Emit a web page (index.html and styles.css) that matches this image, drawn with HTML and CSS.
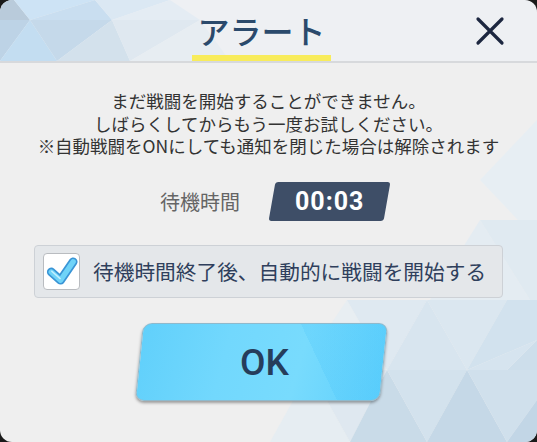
FILE: index.html
```html
<!DOCTYPE html>
<html lang="ja">
<head>
  <meta charset="UTF-8" />
  <meta name="viewport" content="width=device-width,initial-scale=1.0" />
  <title>アラート</title>
  <link rel="stylesheet" href="styles.css">
</head>
<body>

  <div class="dialog">
    <svg class="deco" viewBox="0 0 537 442" preserveAspectRatio="none" aria-hidden="true">
      <!-- header triangles -->
      <polygon points="0,0 14,0 30,20 0,20" fill="#b9cbdb"/>
      <polygon points="14,0 95,0 30,20" fill="#cde3f5"/>
      <polygon points="30,20 95,0 112,20" fill="#c9def0"/>
      <polygon points="95,0 170,0 112,20" fill="#dbe8f3"/>
      <polygon points="112,20 170,0 200,20" fill="#e4ecf3"/>
      <polygon points="0,20 30,20 0,61" fill="#bdd3e6"/>
      <polygon points="0,61 30,20 57,61" fill="#c3ddf1"/>
      <polygon points="30,20 112,20 57,61" fill="#c5d9ea"/>
      <polygon points="57,61 112,20 130,61" fill="#d3e1ec"/>
      <polygon points="112,20 200,20 130,61" fill="#dfe8f0"/>
      <polygon points="130,61 200,20 230,61" fill="#e7edf2"/>
      <!-- body triangles -->
      <polygon points="480,180 537,120 537,240" fill="#e7eef3"/>
      <polygon points="430,300 480,220 530,300" fill="#e4ecf2"/>
      <polygon points="480,220 537,220 537,300 530,300" fill="#e0eaf1"/>
      <polygon points="300,370 347,300 387,370" fill="#e8eef2"/>
      <polygon points="347,300 387,370 427,300" fill="#dfe9f1"/>
      <polygon points="387,370 427,300 467,370" fill="#d8e5ef"/>
      <polygon points="427,300 467,370 507,300" fill="#dbe7f0"/>
      <polygon points="467,370 507,300 537,300 537,340" fill="#d2e2ee"/>
      <polygon points="507,370 537,340 537,370" fill="#cddeeb"/>
      <polygon points="467,370 507,370 537,340" fill="#d6e4ef"/>
      <polygon points="270,442 310,370 350,442" fill="#e6edf2"/>
      <polygon points="310,370 350,442 387,370" fill="#dfe8f0"/>
      <polygon points="350,442 387,370 427,442" fill="#c9dbe8"/>
      <polygon points="387,370 427,442 467,370" fill="#d3e2ed"/>
      <polygon points="427,442 467,370 507,442" fill="#c5d8e7"/>
      <polygon points="467,370 507,442 537,400 537,370" fill="#d0e0ec"/>
      <polygon points="507,442 537,442 537,400" fill="#c2d6e6"/>
    </svg>

    <header class="dialog-head">
      <span></span>
      <h1 class="title">アラート</h1>
      <button class="close" aria-label="閉じる">
        <svg width="30" height="30" viewBox="0 0 30 30">
          <path d="M3 3 L27 27 M27 3 L3 27" stroke="#1d2740" stroke-width="3.2" stroke-linecap="round" fill="none"/>
        </svg>
      </button>
    </header>

    <main class="dialog-body">
      <p class="message">
        <span class="line">まだ戦闘を開始することができません。</span>
        <span class="line">しばらくしてからもう一度お試しください。</span>
        <span class="line">※自動戦闘をONにしても通知を閉じた場合は解除されます</span>
      </p>

      <div class="wait">
        <span class="wait-label">待機時間</span>
        <span class="timer"><span class="timer-value">00:03</span></span>
      </div>

      <label class="auto-start">
        <span class="check">
          <svg width="36" height="36" viewBox="0 0 36 36">
            <path d="M7.5 19 L17 27.5 L30 8.5" stroke="#3a95d6" stroke-width="9" stroke-linecap="round" stroke-linejoin="round" fill="none"/>
            <path d="M7.5 19 L17 27.5 L30 8.5" stroke="#6fd3f8" stroke-width="5.5" stroke-linecap="round" stroke-linejoin="round" fill="none"/>
            <path d="M8 18.2 L16.6 25.8" stroke="#c4f0ff" stroke-width="1.5" stroke-linecap="round" fill="none"/>
          </svg>
        </span>
        <span class="auto-start-text">待機時間終了後、自動的に戦闘を開始する</span>
      </label>

      <button class="ok"><span class="ok-text">OK</span></button>
    </main>
  </div>

</body>
</html>
```

FILE: styles.css
```css
* { margin: 0; padding: 0; box-sizing: border-box; }
body {
  background: #1a1a1a;
  font-family: "Noto Sans CJK JP", "Noto Sans", sans-serif;
}
.dialog {
  position: relative;
  width: 537px;
  height: 442px;
  border-radius: 12px;
  overflow: hidden;
  background: linear-gradient(#eef0f3 0, #eef0f3 61px, #efefef 61px);
  display: flex;
  flex-direction: column;
}
.deco {
  position: absolute; top: 0; left: 0;
  width: 100%; height: 100%;
  z-index: 0;
}

/* header */
.dialog-head {
  position: relative; z-index: 1;
  height: 63px;
  border-bottom: 2px solid #d7d9dc;
  display: grid;
  grid-template-columns: 1fr auto 1fr;
  align-items: end;
}
.title {
  font-size: 32px;
  font-weight: 500;
  line-height: 40px;
  color: #2b4a6c;
  padding: 0 5px 5px;
  border-bottom: 6px solid #f8ec5b;
  margin-right: 14px;
}
.close {
  justify-self: end;
  align-self: center;
  margin-right: 32px;
  margin-top: 1px;
  background: none;
  border: none;
  display: flex;
}

/* body */
.dialog-body {
  position: relative; z-index: 1;
  flex: 1;
  display: flex;
  flex-direction: column;
  align-items: center;
}
.message {
  margin-top: 27px;
  font-size: 17.5px;
  color: #333;
  text-align: center;
  white-space: nowrap;
  display: flex;
  flex-direction: column;
  align-items: center;
}
.message .line {
  display: block;
  height: 22.5px;
  line-height: 22.5px;
}
.wait {
  margin-top: 24px;
  display: flex;
  align-items: center;
  gap: 32px;
  padding-left: 10px;
}
.wait-label {
  font-size: 20px;
  color: #656565;
}
.timer {
  width: 115px;
  height: 39px;
  background: #3e4e67;
  border-radius: 3px;
  transform: skewX(-10deg);
  display: flex;
  align-items: center;
  justify-content: center;
}
.timer-value {
  transform: skewX(10deg);
  font-family: Roboto, "Noto Sans", sans-serif;
  font-weight: 700;
  font-size: 25px;
  letter-spacing: 1px;
  color: #fff;
}
.auto-start {
  margin-top: 24px;
  width: 469px;
  height: 53px;
  background: #e4e7ea;
  border: 1.5px solid #cdd1d6;
  border-radius: 4px;
  display: flex;
  align-items: center;
  padding-left: 8px;
  gap: 13px;
}
.check {
  width: 37px;
  height: 37px;
  background: #fff;
  border: 1.5px solid #b9bcc0;
  border-radius: 4px;
  display: flex;
  align-items: center;
  justify-content: center;
}
.auto-start-text {
  font-size: 20.7px;
  color: #2f3f5c;
  white-space: nowrap;
}
.ok {
  margin-top: 25px;
  width: 245px;
  height: 78px;
  border: 1px solid #8fb9cc;
  border-radius: 9px;
  transform: skewX(-6deg);
  margin-left: -14px;
  background:
    linear-gradient(60deg, rgba(255,255,255,0) 0, rgba(255,255,255,0) 70%, rgba(60,190,250,0.18) 70%),
    linear-gradient(100deg, #61d0fb 0, #72d8fd 35%, #78dbfd 65%, #5fd0fc 100%);
  box-shadow: 0 2px 3px rgba(0,0,0,0.35);
  display: flex;
  align-items: center;
  justify-content: center;
}
.ok-text {
  transform: skewX(6deg);
  font-family: Roboto, "Noto Sans", sans-serif;
  font-weight: 500;
  font-size: 37px;
  color: #263d5b;
  margin-left: 6px;
}
```
